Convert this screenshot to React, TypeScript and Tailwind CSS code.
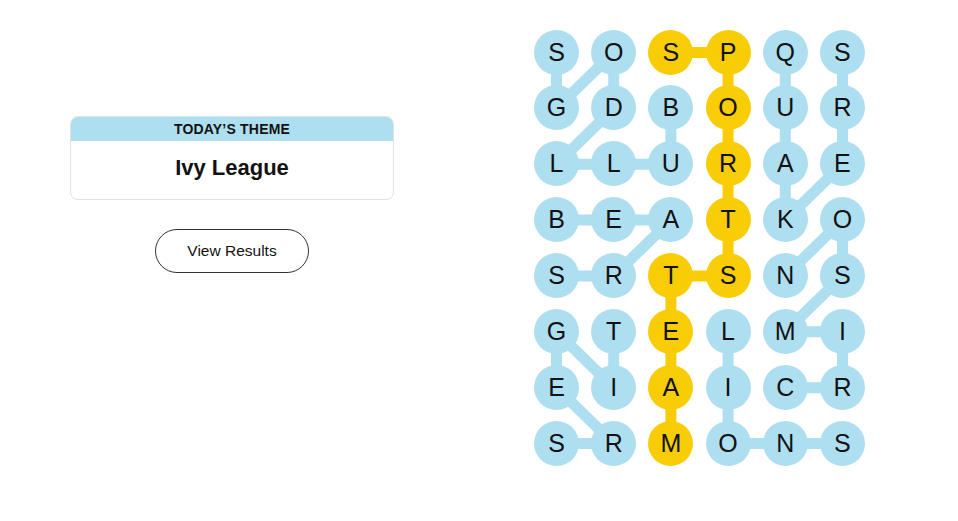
const letters = [
  "SOSPQS",
  "GDBOUR",
  "LLURAE",
  "BEATKO",
  "SRTSNS",
  "GTELMI",
  "EIAICR",
  "SRMONS",
]

// words as paths of [row, col]
const words: { path: [number, number][]; spangram?: boolean }[] = [
  { path: [[1, 2], [2, 2], [2, 1], [2, 0], [1, 1], [0, 1], [1, 0], [0, 0]] },
  { path: [[0, 4], [1, 4], [2, 4], [3, 4], [2, 5], [1, 5], [0, 5]] },
  { path: [[3, 0], [3, 1], [3, 2], [4, 1], [4, 0]] },
  { path: [[5, 3], [6, 3], [7, 3], [7, 4], [7, 5]] },
  { path: [[6, 4], [6, 5], [5, 5], [5, 4], [4, 5], [3, 5], [4, 4]] },
  { path: [[5, 1], [6, 1], [5, 0], [6, 0], [7, 1], [7, 0]] },
  {
    path: [[0, 2], [0, 3], [1, 3], [2, 3], [3, 3], [4, 3], [4, 2], [5, 2], [6, 2], [7, 2]],
    spangram: true,
  },
]

const BLUE = "#aedff0"
const YELLOW = "#f8cd05"
const CELL = 45
const STEP_X = 57.2
const STEP_Y = 55.86

const spanCells = new Set(
  words.filter((w) => w.spangram).flatMap((w) => w.path.map(([r, c]) => `${r}-${c}`))
)

function Board() {
  const cx = (c: number) => CELL / 2 + c * STEP_X
  const cy = (r: number) => CELL / 2 + r * STEP_Y

  return (
    <div className="relative">
      <svg className="absolute inset-0" width={CELL + 5 * STEP_X} height={CELL + 7 * STEP_Y}>
        {words.map((w, i) =>
          w.path.slice(1).map(([r, c], j) => {
            const [pr, pc] = w.path[j]
            return (
              <line
                key={`${i}-${j}`}
                x1={cx(pc)}
                y1={cy(pr)}
                x2={cx(c)}
                y2={cy(r)}
                stroke={w.spangram ? YELLOW : BLUE}
                strokeWidth={11}
              />
            )
          })
        )}
      </svg>
      <div className="relative grid grid-cols-[repeat(6,45px)] gap-x-[12.2px] gap-y-[10.86px]">
        {letters.flatMap((row, r) =>
          row.split("").map((ch, c) => (
            <div
              key={`${r}-${c}`}
              className={`flex h-[45px] w-[45px] items-center justify-center rounded-full text-[25px] leading-none text-[#121212] ${
                spanCells.has(`${r}-${c}`) ? "bg-[#f8cd05]" : "bg-[#aedff0]"
              }`}
            >
              {ch}
            </div>
          ))
        )}
      </div>
    </div>
  )
}

export default function App() {
  return (
    <div className="flex h-[521px] w-[958px] bg-white font-['Liberation_Sans',Arial,sans-serif] text-[#121212]">
      <div className="flex w-[464px] flex-col items-center pt-[116px]">
        <div className="w-[324px] overflow-hidden rounded-[8px] border border-[#e2e2e2]">
          <div className="flex h-[24px] items-center justify-center bg-[#aedff0] text-[14px] font-semibold uppercase tracking-[0.2px]">
            Today’s Theme
          </div>
          <div className="flex h-[58px] items-center justify-center pb-[6px] text-[22px] font-bold">
            Ivy League
          </div>
        </div>
        <button className="mt-[29px] flex h-[44px] w-[154px] items-center justify-center rounded-full border border-[#333] text-[15.5px]">
          View Results
        </button>
      </div>
      <div className="pl-[70px] pt-[29.5px]">
        <Board />
      </div>
    </div>
  )
}
